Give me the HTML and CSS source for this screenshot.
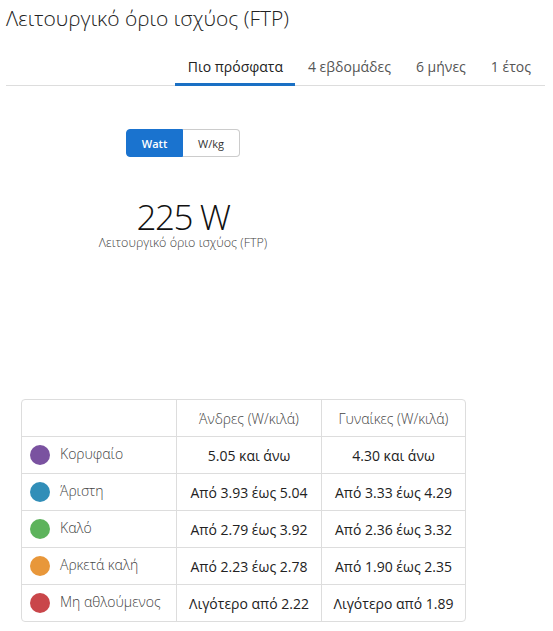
FILE: index.html
```html
<!DOCTYPE html>
<html>
<head>
<meta charset="utf-8">
<link rel="stylesheet" href="styles.css">
</head>
<body>
<div class="page">
  <h1 class="title">Λειτουργικό όριο ισχύος (FTP)</h1>
  <nav class="tabs">
    <span class="tab active">Πιο πρόσφατα</span>
    <span class="tab">4 εβδομάδες</span>
    <span class="tab">6 μήνες</span>
    <span class="tab">1 έτος</span>
  </nav>
  <div class="summary">
    <div class="toggle">
      <span class="btn on">Watt</span>
      <span class="btn">W/kg</span>
    </div>
    <div class="value">225 W</div>
    <div class="caption">Λειτουργικό όριο ισχύος (FTP)</div>
  </div>
  <table class="levels">
    <thead>
      <tr><th></th><th>Άνδρες (W/κιλά)</th><th>Γυναίκες (W/κιλά)</th></tr>
    </thead>
    <tbody>
      <tr><td class="name"><span class="dot purple"></span>Κορυφαίο</td><td>5.05 και άνω</td><td>4.30 και άνω</td></tr>
      <tr><td class="name"><span class="dot blue"></span>Άριστη</td><td>Από 3.93 έως 5.04</td><td>Από 3.33 έως 4.29</td></tr>
      <tr><td class="name"><span class="dot green"></span>Καλό</td><td>Από 2.79 έως 3.92</td><td>Από 2.36 έως 3.32</td></tr>
      <tr><td class="name"><span class="dot orange"></span>Αρκετά καλή</td><td>Από 2.23 έως 2.78</td><td>Από 1.90 έως 2.35</td></tr>
      <tr><td class="name"><span class="dot red"></span>Μη αθλούμενος</td><td>Λιγότερο από 2.22</td><td>Λιγότερο από 1.89</td></tr>
    </tbody>
  </table>
</div>
</body>
</html>
```
FILE: styles.css
```css
* { box-sizing: border-box; }
body {
  margin: 0;
  background: #fff;
  font-family: "Open Sans", "Noto Sans", sans-serif;
  color: #222;
}
.page {
  padding: 0 8px 0 6px;
}
.title {
  margin: 0;
  padding-top: 3px;
  font-size: 21px;
  font-weight: 300;
  line-height: 30px;
  color: #222;
}
.tabs {
  display: flex;
  justify-content: flex-end;
  margin-top: 20px;
  border-bottom: 1px solid #ddd;
  padding-right: 2px;
}
.tab {
  font-size: 14px;
  color: #555;
  padding: 4px 12px 7px 13px;
  line-height: 19px;
  border-bottom: 3px solid transparent;
  margin-bottom: -1px;
}
.tab.active {
  color: #222;
  border-bottom-color: #1a70c4;
}
.summary {
  width: 354px;
  display: flex;
  flex-direction: column;
  align-items: center;
  padding-top: 43px;
  height: 313px;
}
.toggle {
  display: flex;
}
.btn {
  width: 57px;
  height: 28px;
  display: flex;
  align-items: center;
  justify-content: center;
  font-size: 11px;
  border: 1px solid #ccc;
  color: #333;
  background: #fff;
}
.btn.on {
  background: #1a73cf;
  border-color: #1a73cf;
  color: #fff;
  border-radius: 4px 0 0 4px;
  font-weight: 600;
}
.btn:last-child {
  border-left: none;
  border-radius: 0 4px 4px 0;
}
.value {
  margin-top: 46px;
  font-size: 35px;
  font-weight: 300;
  letter-spacing: -1.4px;
  line-height: 28px;
  color: #111;
}
.caption {
  margin-top: 5px;
  font-size: 12.5px;
  font-weight: 300;
  color: #444;
  line-height: 14px;
}
.levels {
  margin-left: 15px;
  width: 445px;
  border-collapse: separate;
  border-spacing: 0;
  border: 1px solid #ddd;
  border-radius: 4px;
  font-size: 14px;
}
.levels th, .levels td {
  height: 37px;
  padding: 0 6px;
  border-left: 1px solid #ddd;
  border-top: 1px solid #ddd;
  text-align: center;
  white-space: nowrap;
}
.levels th {
  font-weight: 300;
  color: #444;
  border-top: none;
  height: 36px;
}
.levels th:first-child, .levels td:first-child {
  border-left: none;
}
.levels th:first-child { width: 154px; }
.levels th:nth-child(2) { width: 145px; }
.levels td { color: #222; }
.levels td.name {
  text-align: left;
  padding-left: 8px;
  color: #444;
  font-weight: 300;
}
.name .dot {
  display: inline-block;
  width: 20px;
  height: 20px;
  border-radius: 50%;
  vertical-align: middle;
  margin-right: 10px;
  position: relative;
  top: -1px;
}
.purple { background: #7a52a0; }
.blue { background: #318eb8; }
.green { background: #5db35c; }
.orange { background: #e8973a; }
.red { background: #c9464a; }
```
